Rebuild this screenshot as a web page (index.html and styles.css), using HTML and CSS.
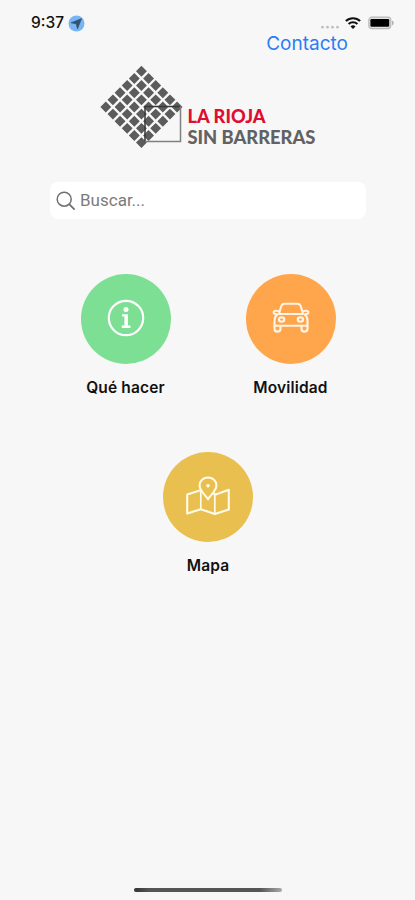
FILE: index.html
```
<!DOCTYPE html>
<html lang="es">
<head>
    <meta charset="UTF-8">
    <meta name="viewport" content="width=device-width, initial-scale=1.0">
    <title>La Rioja sin barreras</title>
    <link rel="stylesheet" href="styles.css">
</head>
<body>
    <div class="status-bar">
        <span class="hora">9:37</span>
        <svg class="ubicacion" width="17" height="17" viewBox="0 0 17 17">
            <circle cx="8.5" cy="8.5" r="8" fill="#78b5f5"/>
            <path d="M13.6 3.6L3 7.8l5.2 1.1 1.3 5z" fill="#35516f" stroke="#35516f" stroke-width=".6"/>
        </svg>
        <div class="status-iconos">
            <svg width="20" height="16" viewBox="0 0 20 16" fill="#c0c0c0">
                <circle cx="2.5" cy="12.2" r="1.4"/>
                <circle cx="7.5" cy="12.2" r="1.4"/>
                <circle cx="12.5" cy="12.2" r="1.4"/>
                <circle cx="17.5" cy="12.2" r="1.4"/>
            </svg>
            <svg class="wifi" width="16" height="16" viewBox="0 0 16 16" fill="none" stroke="#111" stroke-width="2.1">
                <path d="M.9 6.1a10.2 10.2 0 0 1 14.2 0M3.6 9a6.3 6.3 0 0 1 8.8 0"/>
                <path d="M8 14l-2.5-2.6a3.6 3.6 0 0 1 5 0z" fill="#111" stroke="none"/>
            </svg>
            <svg class="bateria" width="26" height="16" viewBox="0 0 26 16">
                <rect x=".8" y="2.2" width="22" height="11.4" rx="3" fill="#e2e2e2" stroke="#b8b8b8" stroke-width="1.2"/>
                <rect x="2.4" y="4" width="18.8" height="7.8" rx="1.2" fill="#000"/>
                <path d="M24 5.6c2.2.8 2.2 3.8 0 4.6z" fill="#b0b0b0"/>
            </svg>
        </div>
    </div>

    <nav class="menu">
        <a href="#" class="contacto">Contacto</a>
    </nav>

    <svg class="logo" width="220" height="84" viewBox="0 0 220 84">
        <!-- rombo de 6x6 cuadrados -->
        <g transform="translate(42.4 .9) rotate(45)" stroke="#5c5c5c" stroke-width="7.7" stroke-dasharray="7.7 2.38">
            <path d="M0 3.8h58.1M0 13.88h58.1M0 23.96h58.1M0 34.04h58.1M0 44.12h58.1M0 54.2h58.1"/>
        </g>
        <path d="M46 76.5V41.5h35" fill="none" stroke="#383838" stroke-width="1.5"/>
        <path d="M46 76.5h35.5v-35" fill="none" stroke="#808080" stroke-width="1.5"/>
        <text class="logo-rojo" x="88.6" y="57.6" textLength="78" lengthAdjust="spacingAndGlyphs">LA RIOJA</text>
        <text class="logo-gris" x="88.4" y="79.2" textLength="128" lengthAdjust="spacingAndGlyphs">SIN BARRERAS</text>
    </svg>

    <form class="buscador">
        <svg width="20" height="20" viewBox="0 0 20 20" fill="none" stroke="#707070" stroke-width="1.5">
            <circle cx="8.2" cy="8.2" r="7"/>
            <path d="M13.2 13.2l5.4 5.4" stroke-width="1.8"/>
        </svg>
        <input type="text" placeholder="Buscar..." aria-label="Buscar">
    </form>

    <main class="opciones">
        <a href="#" class="opcion">
            <span class="circulo verde">
                <svg width="38" height="38" viewBox="0 0 38 38">
                    <circle cx="19" cy="19" r="17.2" fill="none" stroke="#fff" stroke-width="2.2"/>
                    <circle cx="19" cy="10.6" r="2.5" fill="#fff"/>
                    <path d="M15.1 15.2h5.8v11.3h2.6v2.4h-8.7v-2.4h2.6v-8.9h-2.3z" fill="#fff"/>
                </svg>
            </span>
            <span class="texto">Qué hacer</span>
        </a>
        <a href="#" class="opcion">
            <span class="circulo naranja">
                <svg width="38" height="32" viewBox="0 0 38 32" fill="none" stroke="#fff4e5" stroke-width="2.1" stroke-linejoin="round">
                    <path d="M7 12l2.2-7.7C9.8 2.3 11 1.7 12.7 1.7h12.6c1.7 0 2.9.6 3.5 2.6L31 12z"/>
                    <path d="M7.2 9.4c-2.8-1.3-5.3-.6-5.6.7-.3 1.5 1.4 2.1 3.8 2.1M30.8 9.4c2.8-1.3 5.3-.6 5.6.7.3 1.5-1.4 2.1-3.8 2.1"/>
                    <path d="M6 12c-2.4 1.7-3.5 3.5-3.5 6v5.7h33V18c0-2.5-1.1-4.3-3.5-6"/>
                    <path d="M2.5 23.7v3.1c0 3.8 6 3.8 6 0v-3.1M29.5 23.7v3.1c0 3.8 6 3.8 6 0v-3.1"/>
                    <ellipse cx="9.6" cy="17.6" rx="2.7" ry="2.2"/>
                    <ellipse cx="28.4" cy="17.6" rx="2.7" ry="2.2"/>
                </svg>
            </span>
            <span class="texto">Movilidad</span>
        </a>
        <a href="#" class="opcion">
            <span class="circulo amarillo">
                <svg width="44" height="40" viewBox="0 0 44 40" fill="none" stroke="#fffbe8" stroke-width="2.1" stroke-linejoin="round">
                    <path d="M14.6 14.2L1.2 18.4v19.2l13.6-4.4 14 4.8 14-4.6V13.8l-13 4.6-2.6-1"/>
                    <path d="M14.8 15v18.2M28.8 18.6V38" stroke-width="1.7"/>
                    <path d="M22 23.3c-2.3-4.4-8.4-7.8-8.4-14 0-4.5 3.7-7.8 8.4-7.8s8.4 3.3 8.4 7.8c0 6.2-6.1 9.6-8.4 14z"/>
                    <circle cx="22" cy="9.8" r="1.8" fill="#fffbe8" stroke="none"/>
                </svg>
            </span>
            <span class="texto">Mapa</span>
        </a>
    </main>

    <div class="barra-inicio"></div>
</body>
</html>
```
FILE: styles.css
```
* {
    box-sizing: border-box;
}
body {
    margin: 0;
    height: 900px;
    display: flex;
    flex-direction: column;
    background: #f7f7f7;
    font-family: Inter, "Liberation Sans", sans-serif;
    overflow: hidden;
}
a {
    text-decoration: none;
}
.status-bar {
    display: flex;
    align-items: center;
    height: 32px;
    padding: 14px 21px 0 31px;
}
.hora {
    font-size: 15.5px;
    font-weight: 500;
    line-height: 18px;
    width: 37px;
    color: #111;
}
.status-iconos {
    display: flex;
    margin-left: auto;
}
.wifi {
    margin-left: 5px;
}
.bateria {
    margin-left: 7px;
}
.menu {
    height: 24px;
    padding-right: 67px;
    text-align: right;
}
.contacto {
    display: block;
    font-size: 19px;
    line-height: 23px;
    color: #2b7df5;
}
.logo {
    display: block;
    margin: 9px 0 0 99px;
}
.logo-rojo,
.logo-gris {
    font-family: Lato, sans-serif;
    font-size: 18px;
    font-weight: 900;
}
.logo-rojo {
    fill: #df0d32;
}
.logo-gris {
    fill: #626262;
}
.buscador {
    display: flex;
    align-items: center;
    width: 316px;
    height: 37px;
    margin: 33px 0 0 50px;
    padding: 0 6px;
    background: #fff;
    border-radius: 8px;
}
.buscador input {
    flex: 1;
    min-width: 0;
    margin-left: 4px;
    padding: 0 0 1px;
    border: none;
    outline: none;
    background: none;
    font-family: Roboto, sans-serif;
    font-size: 17px;
    color: #333;
}
.buscador input::placeholder {
    color: #7b7b7b;
}
.opciones {
    display: flex;
    flex-wrap: wrap;
    justify-content: center;
    width: 330px;
    margin: 55px 0 0 43px;
    row-gap: 54px;
}
.opcion {
    display: flex;
    flex-direction: column;
    align-items: center;
    width: 165px;
}
.circulo {
    display: flex;
    align-items: center;
    justify-content: center;
    width: 90px;
    height: 90px;
    border-radius: 50%;
}
.circulo svg {
    margin-bottom: 3px;
}
.verde {
    background: #7ddf94;
}
.naranja {
    background: #ffa64d;
}
.amarillo {
    background: #e9c04f;
}
.texto {
    margin-top: 14px;
    font-size: 15.5px;
    font-weight: 600;
    line-height: 20px;
    letter-spacing: 0.15px;
    color: #111;
}
.barra-inicio {
    width: 148px;
    height: 4px;
    margin: auto 0 8px 134px;
    border-radius: 2px;
    background: linear-gradient(to right, #333, #555 10%, #555 85%, #aaa);
}
```
